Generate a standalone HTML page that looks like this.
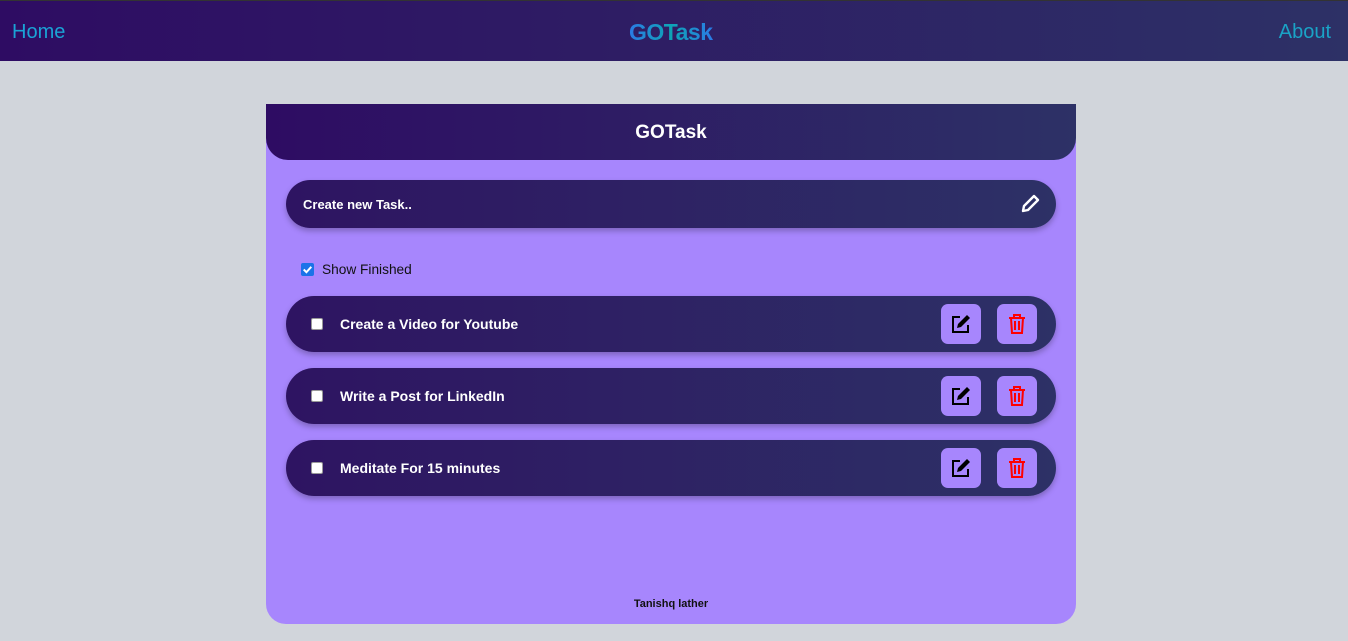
<!DOCTYPE html>
<html><head><meta charset="utf-8"><style>
*{margin:0;padding:0;box-sizing:border-box}
body{width:1348px;height:641px;background:#d1d5db;font-family:"Liberation Sans",sans-serif;overflow:hidden;position:relative}
.nav{position:absolute;left:0;top:0;width:1348px;height:61px;background:linear-gradient(90deg,#2e0c63,#2d3166);border-top:1px solid #333}
.nav .l{position:absolute;left:12px;top:20px;font-size:20px;color:#1aa3d6}
.nav .r{position:absolute;right:17px;top:20px;font-size:20px;color:#1aa3c6}
.nav .c{position:absolute;left:629px;top:18px;font-size:23px;font-weight:bold;background:linear-gradient(90deg,#2b7be6,#0ea5b5,#2b7be6);-webkit-background-clip:text;color:transparent;letter-spacing:-0.5px}
.card{position:absolute;left:266px;top:104px;width:810px;height:520px;background:#a786fd;border-radius:0 0 20px 20px}
.hd{height:56px;background:linear-gradient(90deg,#2e0c63,#2d3166);border-radius:0 0 22px 22px;color:#fff;font-weight:bold;font-size:19px;text-align:center;line-height:58px}
.bar{position:absolute;left:20px;width:770px;background:linear-gradient(90deg,#2e1462,#2d3166);box-shadow:0 3px 6px rgba(0,0,0,.25);color:#fff;font-weight:bold;font-size:13px}
.in{top:76px;height:48px;border-radius:24px;padding:17px 17px}
.row{height:56px;border-radius:28px;font-size:14px}
.row .cb{position:absolute;left:25px;top:22px;width:12px;height:12px;background:#fff;border-radius:2px;border:1px solid #999}
.row .t{position:absolute;left:54px;top:20px}
.btn{position:absolute;top:8px;width:40px;height:40px;background:#a786fd;border-radius:7px}
.sf{position:absolute;left:35px;top:158px;font-size:13.7px;color:#111}
.sf i{position:absolute;left:0;top:1px;width:13px;height:13px;background:#1a73e8;border-radius:2px}
.foot{position:absolute;width:100%;top:494px;text-align:center;font-size:11px;font-weight:bold;color:#111}
</style></head><body>
<div class="nav"><span class="l">Home</span><span class="c">GOTask</span><span class="r">About</span></div>
<div class="card">
<div class="hd">GOTask</div>
<div class="bar in">Create new Task..
<svg style="position:absolute;right:16px;top:14px" width="20" height="20" viewBox="0 0 20 20"><path d="M14 2l4 4-10 10-5 1 1-5z" fill="none" stroke="#fff" stroke-width="2.4" stroke-linejoin="round"/></svg></div>
<div class="sf"><i><svg width="13" height="13" viewBox="0 0 12 12"><path d="M2.5 6l2.5 2.5 4.5-5" fill="none" stroke="#fff" stroke-width="1.8"/></svg></i><span style="margin-left:21px">Show Finished</span></div>
<div class="bar row" style="top:192px"><span class="cb"></span><span class="t">Create a Video for Youtube</span>
<div class="btn" style="left:655px"><svg style="margin:9px" width="22" height="22" viewBox="0 0 22 22"><path d="M10 4H3v15h15v-7" fill="none" stroke="#000" stroke-width="2"/><path d="M17 2l3 3-9 9-4 1 1-4z" fill="#000"/></svg></div>
<div class="btn" style="left:711px"><svg style="margin:9px" width="22" height="22" viewBox="0 0 22 22"><path d="M3 5h16M8 5V2h6v3M5 5l1 15h10l1-15M9 8v9M13 8v9" fill="none" stroke="#f00" stroke-width="2"/></svg></div></div>
<div class="bar row" style="top:264px"><span class="cb"></span><span class="t">Write a Post for LinkedIn</span>
<div class="btn" style="left:655px"><svg style="margin:9px" width="22" height="22" viewBox="0 0 22 22"><path d="M10 4H3v15h15v-7" fill="none" stroke="#000" stroke-width="2"/><path d="M17 2l3 3-9 9-4 1 1-4z" fill="#000"/></svg></div>
<div class="btn" style="left:711px"><svg style="margin:9px" width="22" height="22" viewBox="0 0 22 22"><path d="M3 5h16M8 5V2h6v3M5 5l1 15h10l1-15M9 8v9M13 8v9" fill="none" stroke="#f00" stroke-width="2"/></svg></div></div>
<div class="bar row" style="top:336px"><span class="cb"></span><span class="t">Meditate For 15 minutes</span>
<div class="btn" style="left:655px"><svg style="margin:9px" width="22" height="22" viewBox="0 0 22 22"><path d="M10 4H3v15h15v-7" fill="none" stroke="#000" stroke-width="2"/><path d="M17 2l3 3-9 9-4 1 1-4z" fill="#000"/></svg></div>
<div class="btn" style="left:711px"><svg style="margin:9px" width="22" height="22" viewBox="0 0 22 22"><path d="M3 5h16M8 5V2h6v3M5 5l1 15h10l1-15M9 8v9M13 8v9" fill="none" stroke="#f00" stroke-width="2"/></svg></div></div>
<div class="foot">Tanishq lather</div>
</div>
</body></html>
